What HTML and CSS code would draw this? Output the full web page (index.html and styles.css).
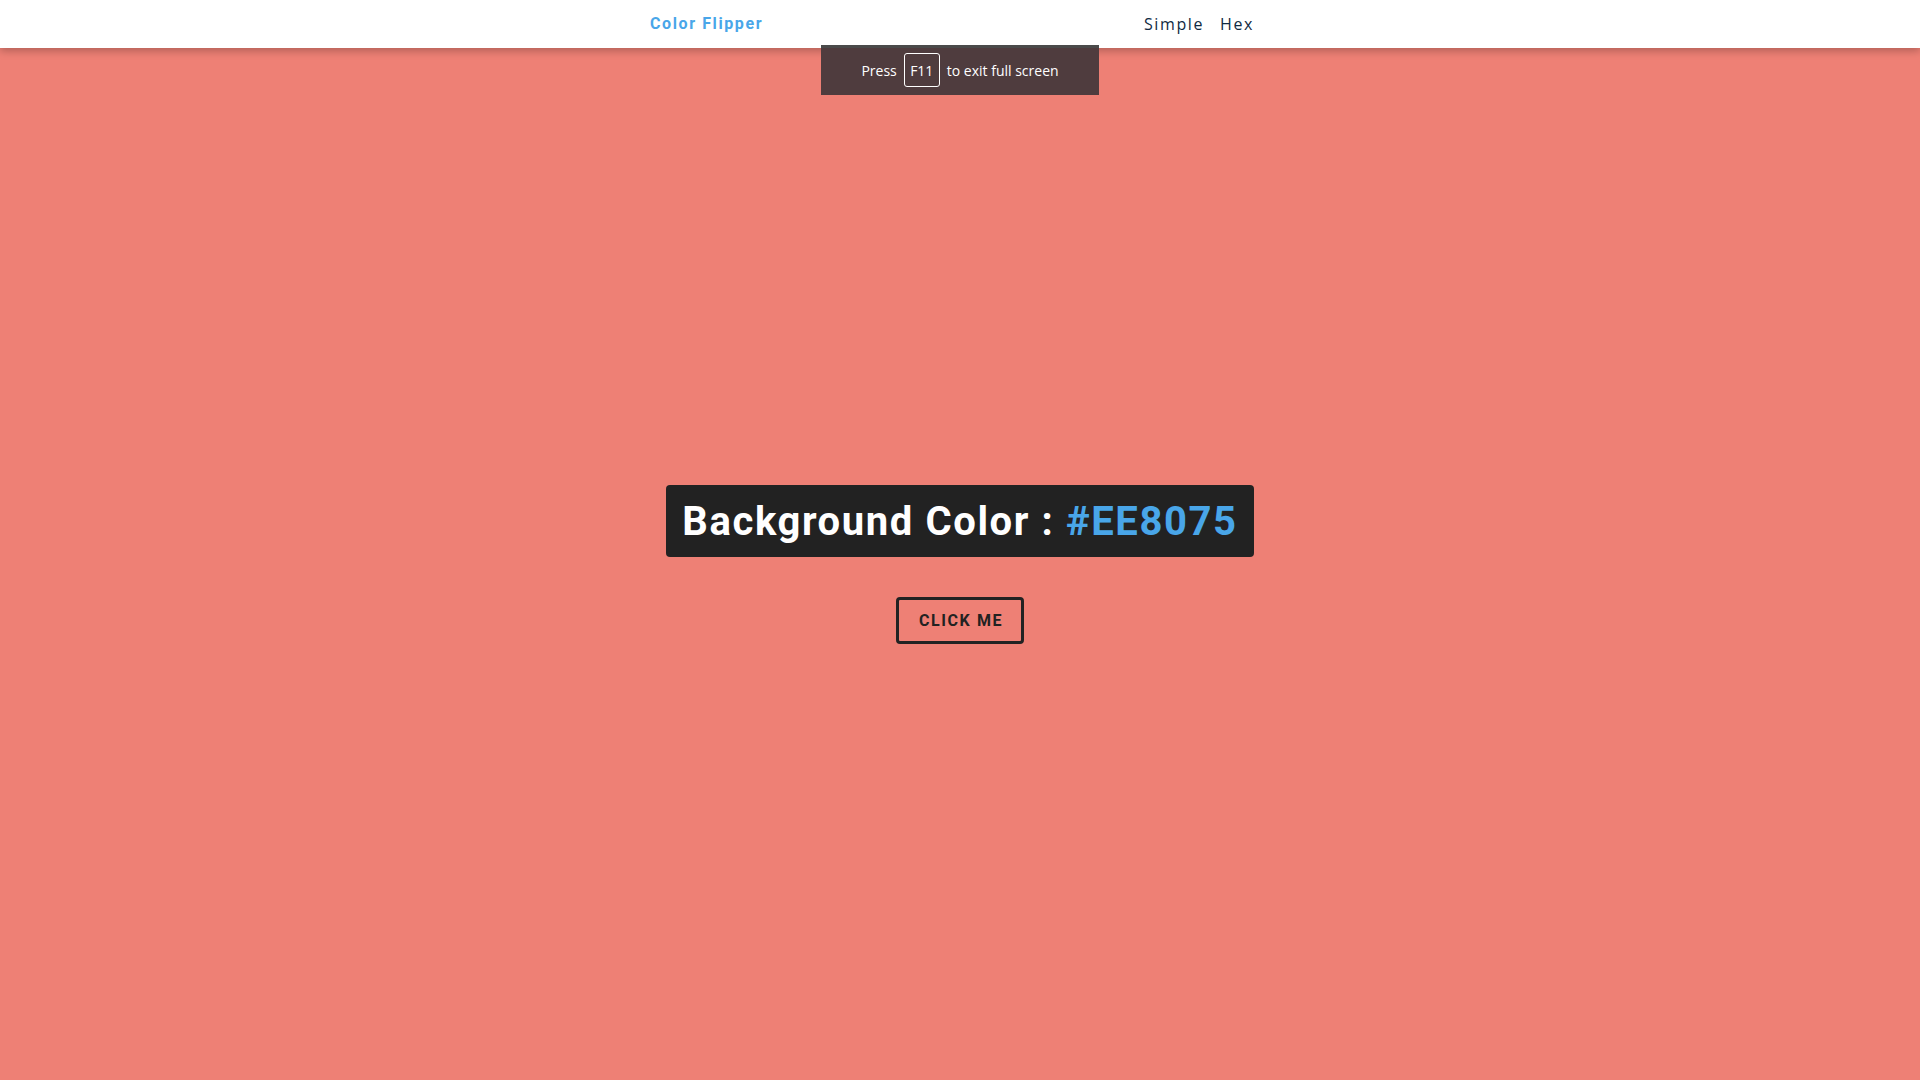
FILE: index.html
```
<!DOCTYPE html>
<html lang="en">
<head>
<meta charset="utf-8">
<title>Color Flipper</title>
<link rel="stylesheet" href="styles.css">
</head>
<body>
<nav class="nav">
  <div class="nav-center">
    <h4 class="logo">Color Flipper</h4>
    <ul class="nav-links">
      <li><a href="#">Simple</a></li>
      <li><a href="#">Hex</a></li>
    </ul>
  </div>
</nav>
<main class="main">
  <div class="container">
    <h2 class="title">Background Color : <span class="color">#EE8075</span></h2>
    <button class="btn-hero" type="button">click me</button>
  </div>
</main>
<div class="fs-toast">Press <span class="key">F11</span> to exit full screen</div>
</body>
</html>
```
FILE: styles.css
```
* { box-sizing: border-box; margin: 0; padding: 0; }
html, body { height: 100%; }
body {
  background: #ee8075;
  font-family: "Open Sans", sans-serif;
  color: #102a42;
  overflow: hidden;
}
.nav {
  background: #fff;
  height: 48px;
  box-shadow: 0 3px 8px rgba(0, 0, 0, 0.25);
  position: relative;
  z-index: 2;
}
.nav-center {
  width: 620px;
  height: 48px;
  margin: 0 auto;
  display: flex;
  align-items: center;
  justify-content: space-between;
}
.logo {
  font-family: Roboto, sans-serif;
  font-weight: 700;
  font-size: 16px;
  letter-spacing: 1.6px;
  color: #49a6e9;
  margin-top: -2px;
}
.nav-links {
  list-style: none;
  display: flex;
}
.nav-links a {
  display: block;
  text-decoration: none;
  color: #102a42;
  font-size: 16px;
  letter-spacing: 1.6px;
  margin-right: 16px;
  line-height: 24px;
}
.main {
  height: calc(100% - 48px);
  display: flex;
  align-items: center;
  justify-content: center;
}
.container {
  display: flex;
  flex-direction: column;
  align-items: center;
  margin-top: 1px;
}
.title {
  font-family: Roboto, sans-serif;
  font-weight: 700;
  font-size: 40px;
  letter-spacing: 1.6px;
  line-height: 50px;
  color: #fff;
  background: #222;
  padding: 12px 16px 10px;
  border-radius: 4px;
  margin-bottom: 40px;
}
.color { color: #49a6e9; }
.btn-hero {
  font-family: Roboto, sans-serif;
  font-weight: 700;
  font-size: 16px;
  text-transform: uppercase;
  letter-spacing: 1.6px;
  color: #222;
  background: transparent;
  border: 3px solid #222;
  border-radius: 4px;
  padding: 0 0 0 2px;
  height: 47px;
  width: 128px;
  white-space: nowrap;
  cursor: pointer;
}
.fs-toast {
  position: fixed;
  top: 45px;
  left: 821px;
  width: 278px;
  height: 50px;
  background: #4f3c3e;
  border-top: 3px solid #4a4a4a;
  color: #fff;
  font-family: "Open Sans", sans-serif;
  font-size: 14px;
  display: flex;
  align-items: center;
  justify-content: center;
  gap: 7px;
  z-index: 5;
  padding-bottom: 3px;
}
.key {
  display: inline-flex;
  align-items: center;
  justify-content: center;
  width: 36px;
  height: 34px;
  border: 1px solid #fff;
  border-radius: 3px;
}
```
